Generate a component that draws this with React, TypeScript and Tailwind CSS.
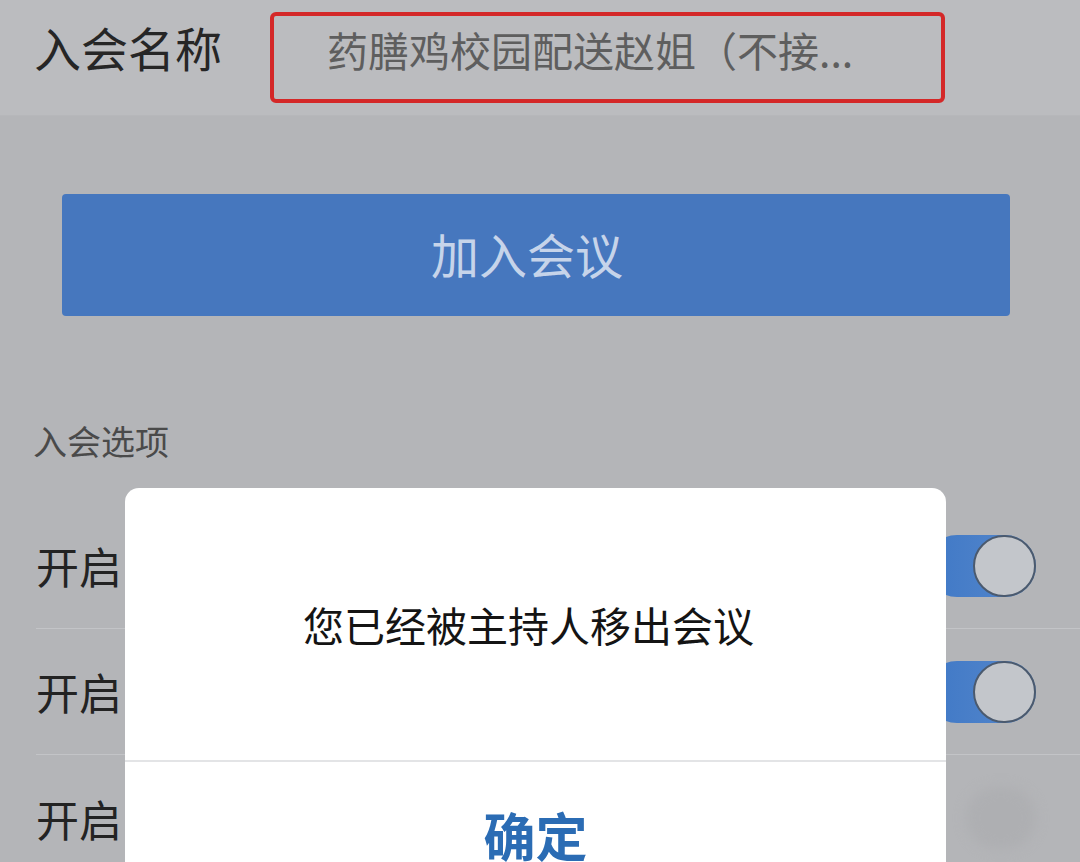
const Toggle = ({ on }: { on: boolean }) => {
  if (!on) {
    return <div className="w-[70px] h-[62px] rounded-full bg-[#aeafb2] blur-[6px]" />;
  }
  return (
    <div className="relative w-[110px] h-[62px] rounded-full bg-gradient-to-r from-[#3f78c6] to-[#5688cc]">
      <div className="absolute right-0 top-0 w-[63px] h-[62px] rounded-full bg-[#c3c6cb] border-2 border-[#4b5a6e]" />
    </div>
  );
};

const OptionRow = ({ on, last }: { on: boolean; last?: boolean }) => (
  <div className={`ml-[36px] h-[126px] flex items-center justify-between pr-[44px] ${last ? "" : "border-b border-[#c3c4c7]"}`}>
    <p className="text-[43px] leading-none text-[#232323]">开启</p>
    <Toggle on={on} />
  </div>
);

const App = () => {
  return (
    <div className="relative w-[1080px] h-[862px] overflow-hidden bg-[#b4b5b8] font-['Noto_Sans_CJK_SC',sans-serif]">
      <div className="h-[116px] bg-[#bbbcbf] flex items-center pl-[34px] border-b border-[#b6b7ba]">
        <p className="text-[47px] leading-none text-[#262626] -mt-[22px]">入会名称</p>
        <div className="ml-[48px] w-[675px] h-[91px] border-4 border-[#d42828] rounded-[6px] flex items-center pl-[53px]">
          <p className="text-[41px] leading-none text-[#5e5e5e] -mt-[16px]">药膳鸡校园配送赵姐（不接...</p>
        </div>
      </div>

      <div className="mt-[78px] ml-[62px] w-[948px] h-[122px] rounded-[4px] bg-[#4677be] flex items-center justify-center">
        <p className="text-[48px] leading-none text-[#c6d4ea] -mt-[4px] -ml-[18px]">加入会议</p>
      </div>

      <p className="mt-[108px] ml-[33px] text-[34px] leading-none text-[#4a4a4a]">入会选项</p>

      <div className="mt-[45px]">
        <OptionRow on />
        <OptionRow on />
        <OptionRow on={false} last />
      </div>

      <div className="absolute left-[125px] top-[488px] w-[821px] h-[420px] bg-white rounded-[14px] flex flex-col">
        <div className="h-[274px] flex items-center justify-center border-b-2 border-[#e3e4e6]">
          <p className="text-[41px] leading-none text-[#141414] -ml-[14px]">您已经被主持人移出会议</p>
        </div>
        <div className="flex justify-center pt-[47px]">
          <p className="text-[52px] leading-none font-bold text-[#2b6cb4]">确定</p>
        </div>
      </div>
    </div>
  );
};

export default App;
